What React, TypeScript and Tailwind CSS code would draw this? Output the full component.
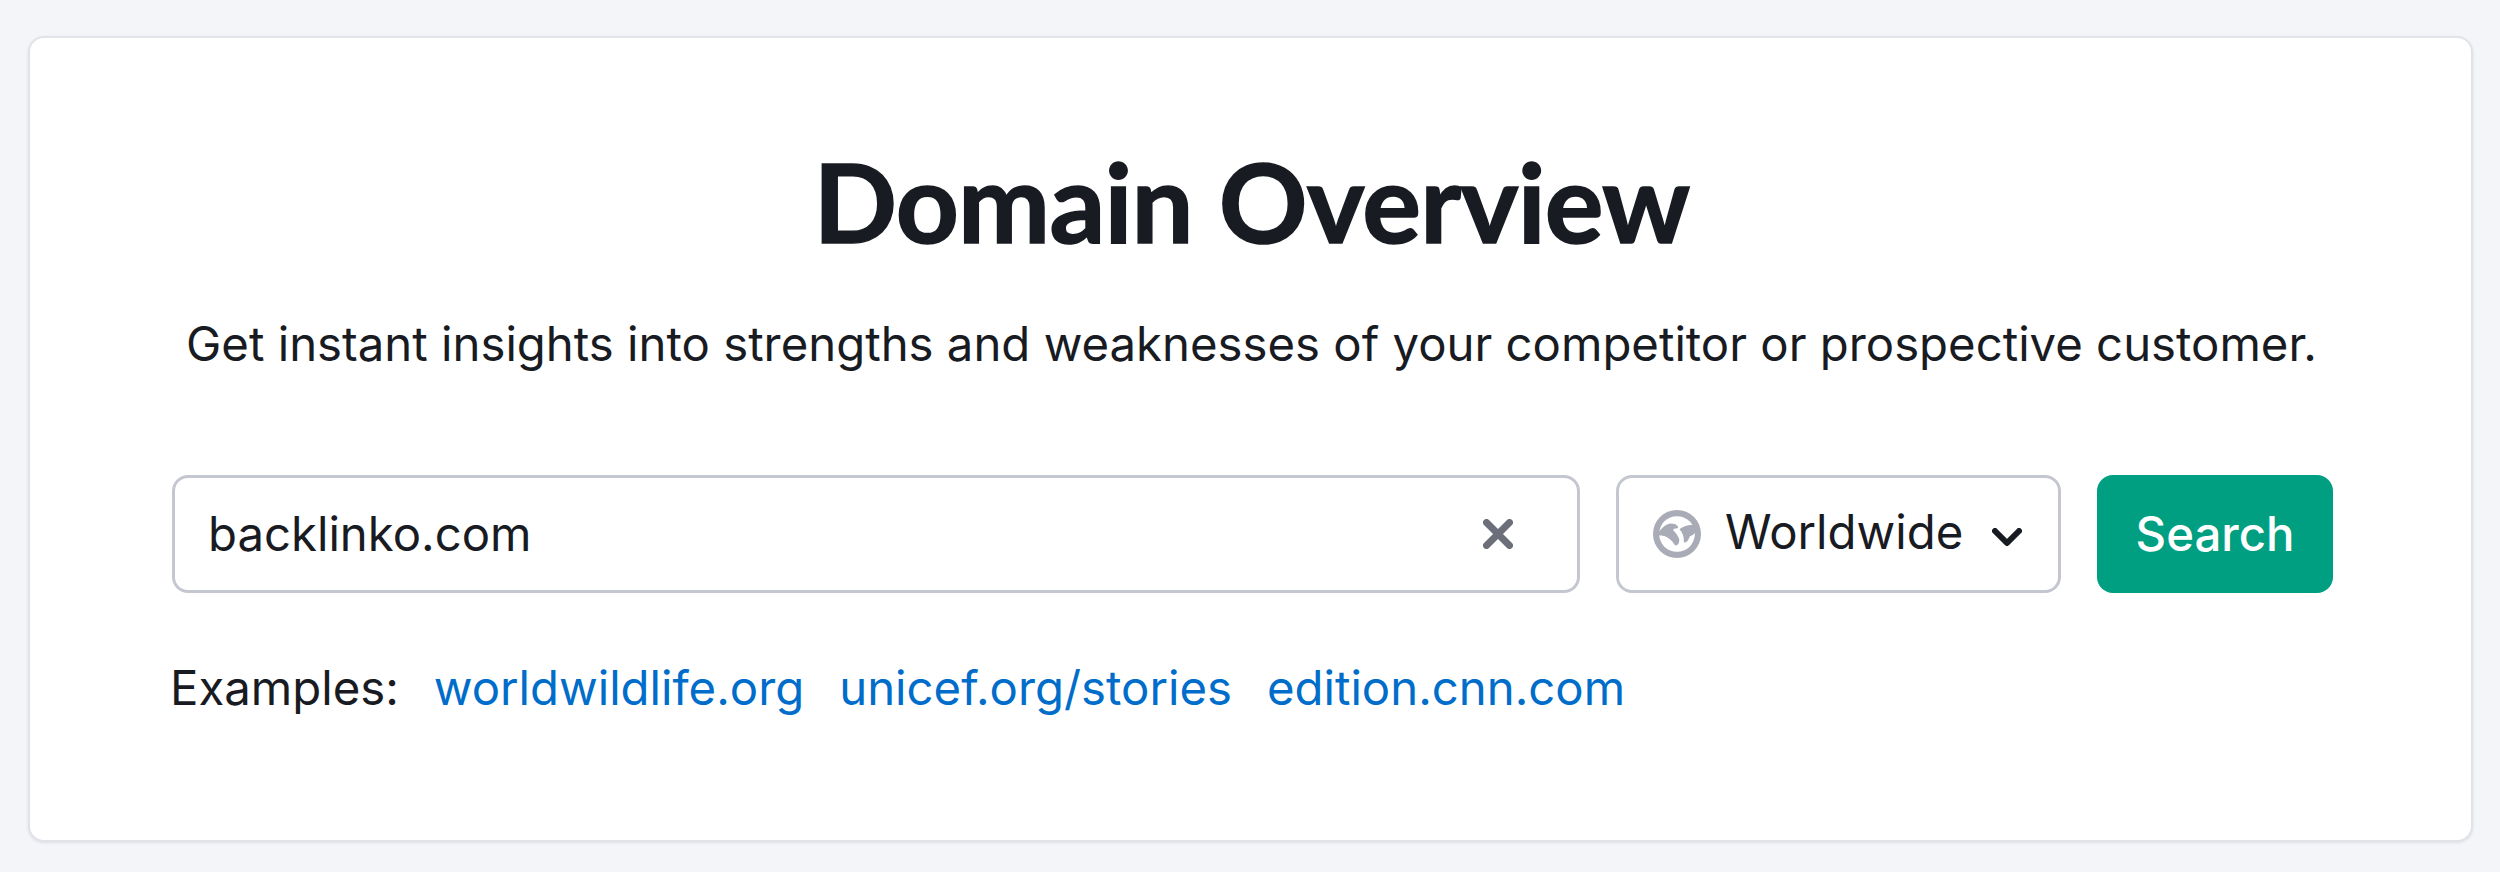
const inter = "font-['Inter','Liberation_Sans',sans-serif]";

function GlobeIcon() {
  return (
    <svg width="48" height="48" viewBox="0 0 47 47" className="shrink-0">
      <circle cx="23.5" cy="23.5" r="23.5" fill="#a9abb6" />
      <circle cx="23.5" cy="23.5" r="17.5" fill="#fff" />
      <g fill="#a9abb6" stroke="#a9abb6" strokeWidth="1.5" strokeLinejoin="round">
        <path d="M4 24 C8 20 11 15 17 14 C20 14 23 15 24 17 C21 17 19 18 19 20 C21 22 24 25 25 29 C25 32 24 34 22 34 C20 30 15 26 12 25 C9 24 7 24 4 24 Z" />
        <path d="M43 16 C38 15 32 15 27 19 C30 22 31 26 31 31 C34 31 34 27 36 25 C39 24 42 22 43 16 Z" />
      </g>
    </svg>
  );
}

export default function App() {
  return (
    <div className={`h-[872px] bg-[#f4f5f9] pt-9 pb-[30px] pl-7 pr-[27px] ${inter}`}>
      <div className="h-full rounded-2xl border-2 border-[#e2e3e8] bg-white pl-[142px] pr-[137px] pt-[106px] text-[#191b23] shadow-[0_1px_3px_rgba(25,27,35,0.1)]">
        <h1 className="pr-[3px] text-center font-['Lato',sans-serif] text-[110px] font-bold leading-[112px] tracking-[-0.8px] [-webkit-text-stroke:1.5px_#191b23]">
          Domain Overview
        </h1>
        <p className="mt-[58px] pr-[3px] text-center text-[47.3px] leading-[60px]">
          Get instant insights into strengths and weaknesses of your competitor or prospective customer.
        </p>
        <div className="mt-[101px] flex h-[118px] gap-[36px]">
          <div className="flex w-[1408px] items-center justify-between rounded-2xl border-[3px] border-[#c4c7cf] pl-[33px] pr-[64px]">
            <span className="text-[47.3px]">backlinko.com</span>
            <svg width="30" height="30" viewBox="0 0 30 30" className="shrink-0">
              <path d="M3.5 3.5 L26.5 26.5 M26.5 3.5 L3.5 26.5" stroke="#6c6e79" strokeWidth="7" strokeLinecap="round" />
            </svg>
          </div>
          <div className="flex w-[445px] items-center rounded-2xl border-[3px] border-[#c4c7cf] pl-[34px]">
            <GlobeIcon />
            <span className="ml-[24px] pb-[4px] text-[47.3px]">Worldwide</span>
            <svg width="30" height="18" viewBox="0 0 30 18" className="ml-[29px] mt-[6px] shrink-0">
              <path d="M3 3 L15 15 L27 3" fill="none" stroke="#191b23" strokeWidth="6" strokeLinecap="round" strokeLinejoin="round" />
            </svg>
          </div>
          <button className="w-[236px] rounded-2xl bg-[#009f81] text-[47.3px] font-medium text-white">Search</button>
        </div>
        <div className="-ml-[2px] mt-[65px] flex gap-[35px] text-[47.3px] leading-[60px]">
          <span>Examples:</span>
          <span className="text-[#006dca]">worldwildlife.org</span>
          <span className="text-[#006dca]">unicef.org/stories</span>
          <span className="text-[#006dca]">edition.cnn.com</span>
        </div>
      </div>
    </div>
  );
}
